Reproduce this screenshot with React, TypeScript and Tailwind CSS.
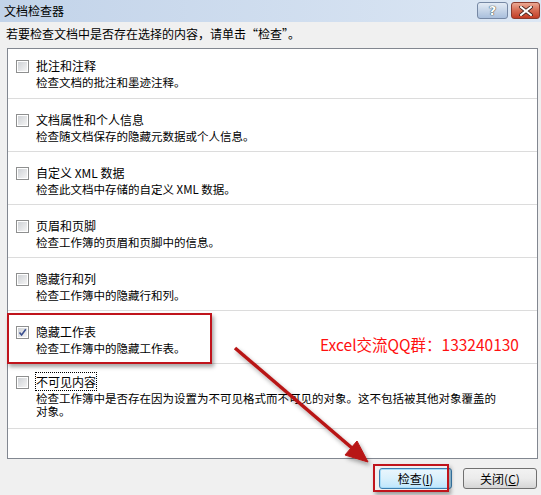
import React from 'react';

type Item = {
  title: string;
  desc: string[];
  checked?: boolean;
  focused?: boolean;
};

const items: Item[] = [
  { title: '批注和注释', desc: ['检查文档的批注和墨迹注释。'] },
  { title: '文档属性和个人信息', desc: ['检查随文档保存的隐藏元数据或个人信息。'] },
  { title: '自定义 XML 数据', desc: ['检查此文档中存储的自定义 XML 数据。'] },
  { title: '页眉和页脚', desc: ['检查工作簿的页眉和页脚中的信息。'] },
  { title: '隐藏行和列', desc: ['检查工作簿中的隐藏行和列。'] },
  { title: '隐藏工作表', desc: ['检查工作簿中的隐藏工作表。'], checked: true },
  {
    title: '不可见内容',
    desc: ['检查工作簿中是否存在因为设置为不可见格式而不可见的对象。这不包括被其他对象覆盖的', '对象。'],
    focused: true,
  },
];

const Checkbox: React.FC<{ checked?: boolean }> = ({ checked }) => (
  <div className="w-[13px] h-[13px] shrink-0 border border-[#8e8f8f] bg-white p-[1px]">
    <div className="relative w-full h-full bg-gradient-to-br from-[#cfd2d6] to-[#f4f4f4]">
      {checked && (
        <svg viewBox="0 0 9 9" className="absolute inset-0 w-[9px] h-[9px]">
          <path d="M1.5 4.5 L3.6 7 L7.8 1.2" fill="none" stroke="#3a4f8f" strokeWidth="1.6" />
        </svg>
      )}
    </div>
  </div>
);

// one row of the inspector list
const Row: React.FC<{ item: Item; index: number }> = ({ item, index }) => {
  const height = index === 0 ? 'h-[50px] pt-[9px]' : index === 6 ? 'h-[65px] pt-[10px]' : 'h-[53px] pt-[13px]';
  return (
    <div className={`${height} border-b border-[#dcdcdc] flex gap-[7px] pl-[8px]`}>
      <div className="pt-[2px]">
        <Checkbox checked={item.checked} />
      </div>
      <div className="flex flex-col">
        <div className="leading-[15px] text-[12px]">
          <span className={item.focused ? 'outline outline-1 outline-dotted outline-black' : ''}>{item.title}</span>
        </div>
        <div className="mt-[3px] flex flex-col">
          {item.desc.map((line) => (
            <div key={line} className="text-[11.5px] leading-[13px] whitespace-nowrap">
              {line}
            </div>
          ))}
        </div>
      </div>
    </div>
  );
};

const App: React.FC = () => {
  return (
    <div
      className="relative w-[541px] h-[495px] overflow-hidden bg-[#f0f0f0] text-black"
      style={{ fontFamily: '"Noto Sans CJK SC", "Noto Sans", sans-serif' }}
    >
      {/* Title bar */}
      <div className="h-[22px] flex items-center justify-between bg-gradient-to-r from-[#c2d3e9] to-[#dce7f4] pl-[4px] pr-[1px]">
        <span className="text-[12px] leading-none">文档检查器</span>
        <div className="flex gap-[3px] self-start mt-[2px]">
          <div className="w-[31px] h-[17px] rounded-[3px] border border-[#7688a4] bg-gradient-to-b from-[#e3ebf5] via-[#c6d5e8] to-[#a9bfdc] flex items-center justify-center">
            <span className="text-[13px] font-bold leading-none text-white [text-shadow:0_0_1px_#233,0_0_1px_#233]" style={{ fontFamily: '"DejaVu Sans", sans-serif' }}>?</span>
          </div>
          <div className="w-[29px] h-[17px] rounded-[3px] border border-[#8b3b2e] bg-gradient-to-b from-[#eaa894] via-[#d56a52] to-[#c23b24] flex items-center justify-center">
            <svg viewBox="0 0 14 10" className="w-[14px] h-[10px]">
              <path d="M2 1 L12 9 M12 1 L2 9" stroke="#3b1e1a" strokeWidth="3.6" strokeLinecap="square" />
              <path d="M2 1 L12 9 M12 1 L2 9" stroke="#ffffff" strokeWidth="2" strokeLinecap="square" />
            </svg>
          </div>
        </div>
      </div>

      {/* Instruction */}
      <div className="h-[26px] pl-[6px] pt-[4px] text-[12px] leading-[15px]">
        若要检查文档中是否存在选择的内容，请单击“检查”。
      </div>

      {/* List */}
      <div className="ml-[7px] mr-[3px] h-[411px] border border-[#828790] bg-white overflow-hidden">
        {items.map((item, i) => (
          <Row key={item.title} item={item} index={i} />
        ))}
      </div>

      {/* Buttons */}
      <div className="h-[36px] pt-[9px] flex justify-end gap-[11px] pr-[4px]">
        <button className="w-[73px] h-[21px] rounded-[3px] border border-[#3c7fb1] bg-gradient-to-b from-[#eaf6fd] via-[#d9f0fc] to-[#bee6fd] shadow-[inset_0_0_0_1px_#a8dcf8] text-[12px] leading-none">
          检查(<span className="underline">I</span>)
        </button>
        <button className="w-[74px] h-[21px] rounded-[3px] border border-[#707070] bg-gradient-to-b from-[#f2f2f2] via-[#ebebeb] to-[#d5d5d5] text-[12px] leading-none">
          关闭(<span className="underline">C</span>)
        </button>
      </div>

      {/* Annotations */}
      <div className="absolute left-[7px] top-[313px] w-[205px] h-[51px] border-2 border-[#c0141c] shadow-[2px_3px_4px_rgba(0,0,0,0.35)]" />
      <div className="absolute left-[373px] top-[464px] w-[76px] h-[28px] border-2 border-[#c0141c] shadow-[2px_3px_4px_rgba(0,0,0,0.35)]" />
      <div className="absolute left-[320px] top-[334px] text-[15.5px] leading-[21px] text-[#ff1010]">Excel交流QQ群：133240130</div>
      <svg className="absolute inset-0 pointer-events-none" width="541" height="495" viewBox="0 0 541 495">
        <defs>
          <filter id="sh" x="-20%" y="-20%" width="140%" height="140%">
            <feDropShadow dx="2" dy="3" stdDeviation="2" floodColor="#000" floodOpacity="0.35" />
          </filter>
        </defs>
        <g filter="url(#sh)" fill="#b81414" stroke="#b81414">
          <line x1="235" y1="348" x2="352" y2="448" strokeWidth="3.5" />
          <polygon points="368,462 345,455 357,441" strokeWidth="1" />
        </g>
      </svg>
    </div>
  );
};

export default App;
